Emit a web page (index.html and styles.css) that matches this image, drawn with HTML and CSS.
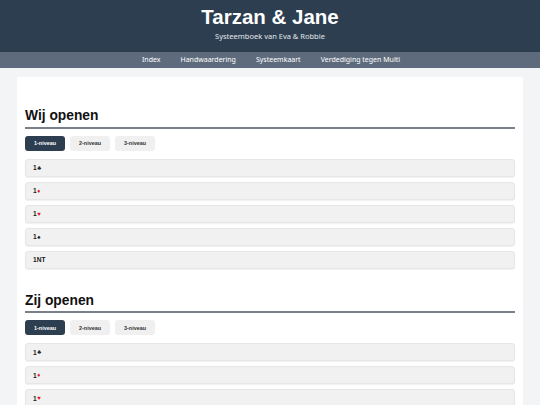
FILE: index.html
```html
<!DOCTYPE html>
<html lang="nl">
<head>
<meta charset="utf-8">
<title>Tarzan &amp; Jane</title>
<link rel="stylesheet" href="styles.css">
</head>
<body>
<header class="site-header">
  <h1 class="site-title">Tarzan &amp; Jane</h1>
  <p class="site-subtitle">Systeemboek van Eva &amp; Robbie</p>
</header>
<nav class="site-nav">
  <a href="#">Index</a>
  <a href="#">Handwaardering</a>
  <a href="#">Systeemkaart</a>
  <a href="#">Verdediging tegen Multi</a>
</nav>
<main class="page">
  <div class="card">
    <section class="block">
      <h2 class="block-title">Wij openen</h2>
      <div class="tabs">
        <button class="tab active">1-niveau</button>
        <button class="tab">2-niveau</button>
        <button class="tab">3-niveau</button>
      </div>
      <div class="rows">
        <div class="row">1<span class="suit black">♣</span></div>
        <div class="row">1<span class="suit red">♦</span></div>
        <div class="row">1<span class="suit red">♥</span></div>
        <div class="row">1<span class="suit black">♠</span></div>
        <div class="row">1NT</div>
      </div>
    </section>
    <section class="block">
      <h2 class="block-title">Zij openen</h2>
      <div class="tabs">
        <button class="tab active">1-niveau</button>
        <button class="tab">2-niveau</button>
        <button class="tab">3-niveau</button>
      </div>
      <div class="rows">
        <div class="row">1<span class="suit black">♣</span></div>
        <div class="row">1<span class="suit red">♦</span></div>
        <div class="row">1<span class="suit red">♥</span></div>
        <div class="row">1<span class="suit black">♠</span></div>
        <div class="row">1NT</div>
      </div>
    </section>
  </div>
</main>
</body>
</html>
```
FILE: styles.css
```css
* { box-sizing: border-box; }
html, body { margin: 0; padding: 0; }
body {
  background: #f3f4f6;
  font-family: "Liberation Sans", Arial, sans-serif;
  color: #222;
}
.site-header {
  background: #2c3e50;
  color: #fff;
  text-align: center;
  padding: 5px 0 11px;
  height: 52px;
}
.site-title {
  margin: 0;
  font-size: 20.5px;
  line-height: 24px;
  font-weight: bold;
}
.site-subtitle {
  margin: 2px 0 0;
  font-family: "Noto Sans", sans-serif;
  font-size: 7.5px;
  line-height: 10px;
  color: #e3e7ec;
}
.site-nav {
  background: #5e6b7c;
  height: 16px;
  display: flex;
  justify-content: center;
  align-items: center;
  gap: 20px;
  padding-left: 2px;
}
.site-nav a {
  font-family: "Noto Sans", sans-serif;
  font-size: 7px;
  color: #fff;
  text-decoration: none;
  line-height: 16px;
}
.page {
  padding: 9px 17px 0;
}
.card {
  background: #fff;
  padding: 8px 8px 20px;
  border-radius: 2px;
}
.block-title {
  margin: 22px 0 0;
  font-size: 13.8px;
  line-height: 17px;
  font-weight: bold;
  color: #111;
  padding-bottom: 2.5px;
  border-bottom: 2px solid #7a8088;
}
.block:first-child .block-title { margin-top: 22px; }
.block + .block .block-title { margin-top: 23px; }
.tabs {
  display: flex;
  gap: 5px;
  margin-top: 7px;
}
.tab {
  font-family: "Liberation Sans", Arial, sans-serif;
  font-size: 5.4px;
  font-weight: bold;
  height: 15px;
  width: 40px;
  padding: 0;
  border: 0;
  border-radius: 3px;
  background: #f0f0f0;
  color: #333;
}
.tab.active {
  background: #2c3e50;
  color: #fff;
}
.rows {
  margin-top: 8px;
  display: flex;
  flex-direction: column;
  gap: 5px;
}
.row {
  height: 18px;
  background: #f1f1f1;
  border: 1px solid #e6e6e6;
  border-radius: 3px;
  box-shadow: 0 1px 1px rgba(0,0,0,0.06);
  font-size: 6.6px;
  font-weight: bold;
  color: #1a1a1a;
  padding-left: 7px;
  display: flex;
  align-items: center;
}
.suit { font-size: 6px; margin-left: 0.5px; }
.suit.red { color: #e0141e; }
.suit.black { color: #222; }
```
